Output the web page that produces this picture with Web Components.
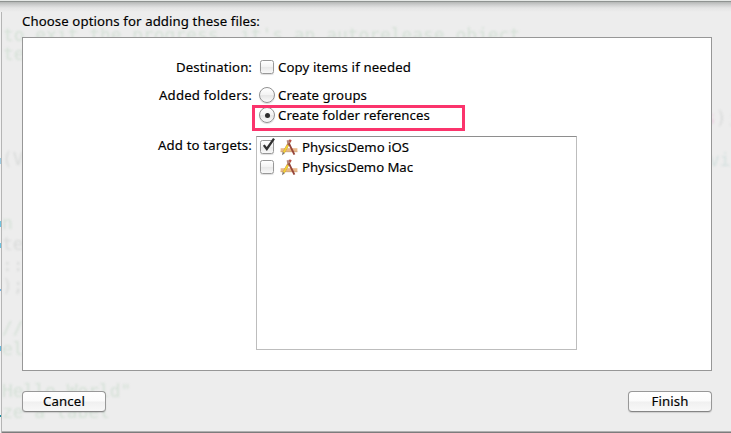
<!DOCTYPE html>
<html lang="en"><head><meta charset="utf-8"><title>Add files</title>
<style>html,body{margin:0;width:731px;height:433px;overflow:hidden;background:#ededed}</style></head><body>
<file-sheet></file-sheet>
<script>
const define=(name,html,init)=>customElements.define(name,class extends HTMLElement{
  connectedCallback(){ if(this.shadowRoot)return; this.attachShadow({mode:'open'}).innerHTML=html; if(init)init.call(this,this.shadowRoot); }
});

// One line of label text, tracked so that it fills the width given in "w".
define('fit-label',`<style>:host{display:block;height:18px;font:13.2px/18px "Noto Sans","Open Sans",sans-serif;color:#000;white-space:nowrap;-webkit-text-stroke:.15px #000}span{display:inline-block}</style><span><slot></slot></span>`,function(root){
  const s=root.querySelector('span'),w=+this.getAttribute('w'),n=this.textContent.length;
  s.style.letterSpacing=((w-s.getBoundingClientRect().width)/n).toFixed(3)+'px';
});

define('push-button',`<style>:host{display:block;box-sizing:border-box;width:84px;height:21px;border:1px solid #989898;border-bottom-color:#858585;border-radius:4px;background:linear-gradient(#fff,#fbfbfb 48%,#f0f0f0 52%,#f8f8f8);box-shadow:0 1px 1px #0002}div{display:flex;justify-content:center;height:19px}</style><div><slot></slot></div>`);

define('check-box',`<style>:host{display:block;position:relative;box-sizing:border-box;width:14px;height:14px;border:1px solid #989898;border-radius:2.5px;background:linear-gradient(#fff,#f3f3f3 48%,#e9e9e9 54%,#f8f8f8);box-shadow:0 1px 1px #0002}svg{display:none;position:absolute;left:-1px;top:-4px}:host([checked]) svg{display:block}</style><svg width="17" height="17" viewBox="0 0 17 17"><path d="M3.8 8.1 6.8 12 14 1.6" fill="none" stroke="#303030" stroke-width="2.3"/></svg>`);

define('radio-dot',`<style>:host{display:flex;align-items:center;justify-content:center;box-sizing:border-box;width:16px;height:16px;border:1px solid #919191;border-radius:50%;background:linear-gradient(#fff,#f3f3f3 48%,#e6e6e6 54%,#fafafa);box-shadow:0 1px 1px #0002}i{display:none;width:5px;height:5px;border-radius:50%;background:#2c2c2c}:host([checked]) i{display:block}</style><i></i>`);

define('app-icon',`<style>:host{display:block;width:18px;height:17px}svg{display:block}</style><svg width="18" height="17" viewBox="0 0 18 17">
<path d="M.6 9.2h16.8v3.6H.6z" fill="#e8b98b"/><path d="M.6 12.7h16.8" stroke="#c99668" stroke-width=".7"/>
<path d="M10.2 1.6 3.7 13.5" stroke="#b98253" stroke-width="2.4"/><path d="M7.8 6.2 3.7 13.5" stroke="#f2d335" stroke-width="2"/><path d="M10.7 .8 9.7 2.6" stroke="#ba5147" stroke-width="2.3"/><path d="M2.7 12.8 2 16.2 4.9 14.2z" fill="#82766a"/>
<path d="M7.8 2.2 14.4 15.7" stroke="#96453a" stroke-width="1.9"/><path d="M7.4 1.2 9 4.3" stroke="#b58a80" stroke-width="2.2"/></svg>`);

define('target-row',`<style>:host{display:flex;height:20px;align-items:center}check-box{margin:0 6px 0 3px}app-icon{margin-right:4px}</style><check-box></check-box><app-icon></app-icon><slot></slot>`,function(root){
  if(this.hasAttribute('checked'))root.querySelector('check-box').setAttribute('checked','');
});

// Faint source code that shows through the sheet.
define('code-ghost',`<style>:host{position:absolute;inset:0;overflow:hidden;pointer-events:none;font:17.9px/21px "DejaVu Sans Mono",monospace;filter:blur(.8px)}span{position:absolute;white-space:pre;color:#d9dbda}.g{color:#d5e1d7}.b{color:#d4e0df}</style>
<span class="g" style="left:3px;top:24px">to exit the progress. it's an autorelease object</span>
<span class="g" style="left:3px;top:43px">te</span>
<span style="left:2px;top:148px">(V</span>
<span class="g" style="left:2px;top:212px">n</span>
<span style="left:2px;top:233px">te</span>
<span style="left:2px;top:254px">::</span>
<span style="left:2px;top:275px">);</span>
<span class="g" style="left:2px;top:317px">//</span>
<span class="g" style="left:2px;top:338px">el</span>
<span class="g" style="left:2px;top:380px">Hello World"</span>
<span class="g" style="left:2px;top:401px">ze a label</span>
<span style="left:705px;top:107px"><b style="font-weight:400;color:#ebcfe0">s</b>);</span>
<span class="b" style="left:709px;top:149px">vis</span>`);

define('file-sheet',`<style>
:host{display:block;position:relative;width:731px;height:433px;background:#ededed;overflow:hidden}
.edge{position:absolute;left:0;top:0;width:1px;height:433px;background:
linear-gradient(#9fcde3,#9fcde3) 0 158px/1px 6px no-repeat,linear-gradient(#6fc3df,#6fc3df) 0 221px/1px 6px no-repeat,linear-gradient(#6fc3df,#6fc3df) 0 243px/1px 5px no-repeat,
linear-gradient(#78b4e0,#78b4e0) 0 289px/1px 2px no-repeat,linear-gradient(#68b8dc,#68b8dc) 0 346px/1px 5px no-repeat,linear-gradient(#158c9c,#158c9c) 0 415px/1px 2px no-repeat,#f3f3f3;border-right:1px solid #b5b5b5}
.top{position:absolute;left:0;top:0;right:0;height:12px;background:linear-gradient(#e5e8e6 0 1px,#8f9391 1px 2px,#b4b6b5 2px,#cfd0d0 5px,#e4e4e4 8px,#ededed 12px)}
.bottom{position:absolute;left:2px;bottom:0;right:0;height:2px;background:linear-gradient(#b0b0b0 50%,#7c7c7c 50%)}
.main{position:relative;display:flex;flex-direction:column;padding:12px 19px 0 22px}
.panel{box-sizing:border-box;width:690px;height:334px;margin-top:7px;border:1px solid #979797;background:#fff;padding:20px 0 0 115px}
.grid{display:grid;grid-template-columns:114px 330px;column-gap:4px;grid-template-rows:28px 50px auto}
.grid>fit-label{justify-self:end}
.opt{display:flex;height:20px;align-items:center;margin-top:-1px}
.opt radio-dot{margin:0 3px 0 3px}.opt check-box{margin:0 4px}
.hot{position:relative;margin-top:0}.hot::after{content:"";position:absolute;left:-4px;top:0;width:213px;height:26px;box-sizing:border-box;border:3px solid #fb346c}
.list{box-sizing:border-box;width:321px;height:214px;border:1px solid #bdbdbd;border-top-color:#8e8e8e}
.foot{display:flex;justify-content:space-between;margin-top:20px}
</style><code-ghost></code-ghost><div class="edge"></div><div class="top"></div><div class="bottom"></div>
<div class="main"><fit-label w="238">Choose options for adding these files:</fit-label>
<div class="panel"><div class="grid">
<fit-label w="76">Destination:</fit-label><div class="opt"><check-box></check-box><fit-label w="133">Copy items if needed</fit-label></div>
<fit-label w="93">Added folders:</fit-label><div><div class="opt"><radio-dot></radio-dot><fit-label w="89">Create groups</fit-label></div><div class="opt hot"><radio-dot checked></radio-dot><fit-label w="152">Create folder references</fit-label></div></div>
<fit-label w="94">Add to targets:</fit-label><div class="list"><target-row checked><fit-label w="107">PhysicsDemo iOS</fit-label></target-row><target-row><fit-label w="111">PhysicsDemo Mac</fit-label></target-row></div>
</div></div>
<div class="foot"><push-button><fit-label w="42">Cancel</fit-label></push-button><push-button><fit-label w="37">Finish</fit-label></push-button></div></div>`);
</script></body></html>
